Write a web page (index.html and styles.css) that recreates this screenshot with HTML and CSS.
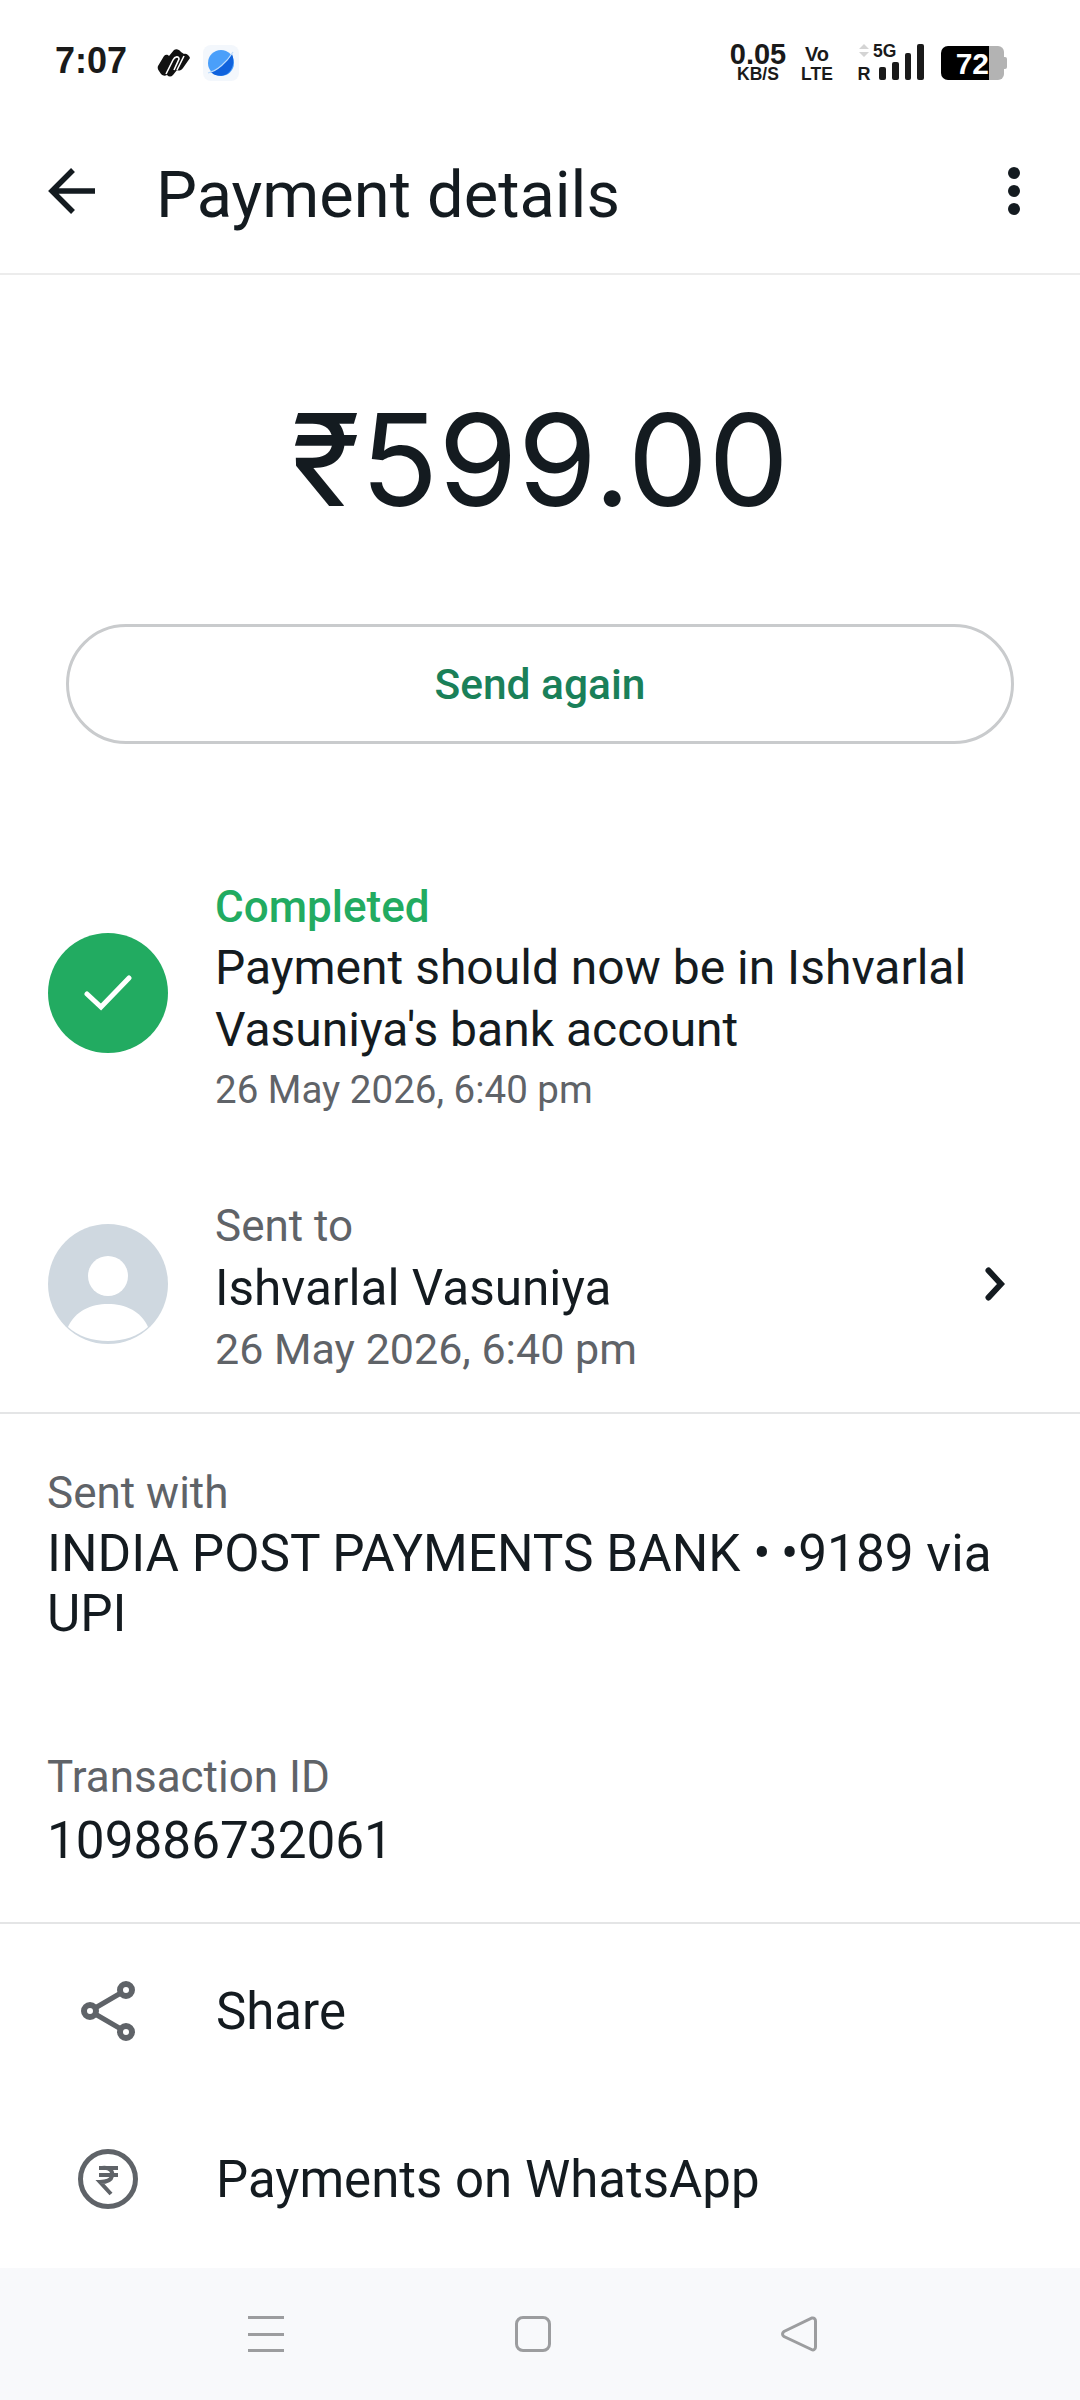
FILE: index.html
```html
<!DOCTYPE html>
<html lang="en">
<head>
  <meta charset="UTF-8">
  <meta name="viewport" content="width=device-width, initial-scale=1.0">
  <title>Payment details</title>
  <link rel="stylesheet" href="styles.css">
</head>
<body>
  <div class="phone">
    <div class="status-bar">
      <span class="clock">7:07</span>
      <svg class="app-logo" viewBox="0 0 34 28" width="34" height="28">
        <path d="M1 17 L7 7 C9 5 11 6 12 7 L17 1 C19 -0.500 22 0 24 3 L27 5 C29 4 32 6 33 9 L26 19 C24 22 21 22 20 21 L16 26 C14 28 12 28 10 26 C8 27 6 27 4 25 L2 22 C0.500 20 0.500 18 1 17Z" fill="#111"/>
        <path d="M9 25 L16 11 C18 7 22 7 22 10 L17 21 M20 21 L27 7" fill="none" stroke="#fff" stroke-width="1.600"/>
      </svg>
      <div class="planet-box">
        <svg viewBox="0 0 36 36" width="36" height="36">
          <circle cx="18" cy="18" r="13" fill="#4a9ffa"/>
          <path d="M7 27 C16 24 25 16 29 9 C32 16 30 25 24 29 C19 32 12 31 9 28Z" fill="#0f62dd"/>
          <path d="M5 28 C14 26 24 17 30 7" stroke="#bcdcfd" stroke-width="1.200" fill="none"/>
        </svg>
      </div>
      <div class="status-right">
        <div class="speed"><span class="speed-num">0.05</span><span class="speed-unit">KB/S</span></div>
        <div class="volte"><span class="vo">Vo</span><span>LTE</span></div>
        <div class="roaming">
          <svg viewBox="0 0 10 14" width="10" height="14"><path d="M5 0 L10 5 H0Z M0 8 H10 L5 13Z" fill="#d4d4d4"/></svg>
          <span>R</span>
        </div>
        <div class="signal">
          <span class="five-g">5G</span>
          <div class="bars">
            <i class="bar b1"></i><i class="bar b2"></i><i class="bar b3"></i><i class="bar b4"></i>
          </div>
        </div>
        <div class="battery">
          <div class="battery-fill">72</div>
          <div class="battery-empty"></div>
          <div class="battery-nub"></div>
        </div>
      </div>
    </div>

    <div class="app-bar">
      <svg class="back" viewBox="0 0 48 48" width="48" height="48">
        <path d="M47 24 H4 M25 3 L4 24 L25 45" stroke="#141b20" stroke-width="5.5" fill="none"/>
      </svg>
      <h1 class="title">Payment details</h1>
      <div class="more"><i></i><i></i><i></i></div>
    </div>

    <div class="amount">₹599.00</div>
    <div class="again-wrap"><button class="again">Send again</button></div>

    <div class="row status-row">
      <div class="icon-done">
        <svg viewBox="0 0 48 36" width="48" height="36"><path d="M3 19 L17 32 L45 3" stroke="#fff" stroke-width="5" stroke-linecap="round" fill="none"/></svg>
      </div>
      <div class="row-text">
        <div class="label green">Completed</div>
        <div class="body">Payment should now be in Ishvarlal Vasuniya's bank account</div>
        <div class="meta">26 May 2026, 6:40 pm</div>
      </div>
    </div>

    <div class="row sent-row">
      <div class="avatar">
        <svg viewBox="0 0 120 120" width="120" height="120">
          <circle cx="60" cy="52" r="20" fill="#fff"/>
          <path d="M20 103 C27 87 43 80 60 80 C77 80 93 87 100 103 C90 112 76 117 60 117 C44 117 30 112 20 103Z" fill="#fff"/>
        </svg>
      </div>
      <div class="row-text">
        <div class="label">Sent to</div>
        <div class="body name">Ishvarlal Vasuniya</div>
        <div class="meta meta-large">26 May 2026, 6:40 pm</div>
      </div>
      <svg class="chevron" viewBox="0 0 20 34" width="20" height="34">
        <path d="M3.500 3.500 L16 17 L3.500 30.500" stroke="#141b20" stroke-width="6" stroke-linecap="round" fill="none"/>
      </svg>
    </div>

    <div class="details">
      <div class="label">Sent with</div>
      <div class="body large bank">INDIA POST PAYMENTS BANK •&thinsp;•9189 via UPI</div>
      <div class="label txn">Transaction ID</div>
      <div class="body large">109886732061</div>
    </div>

    <div class="actions">
      <div class="action">
        <div class="action-icon">
          <svg viewBox="0 0 60 64" width="60" height="64">
            <path d="M12 32 L48 11 M12 32 L48 53" stroke="#5f6368" stroke-width="5" fill="none"/>
            <circle cx="12" cy="32" r="6" fill="#fff" stroke="#5f6368" stroke-width="6"/>
            <circle cx="48" cy="11" r="6" fill="#fff" stroke="#5f6368" stroke-width="6"/>
            <circle cx="48" cy="53" r="6" fill="#fff" stroke="#5f6368" stroke-width="6"/>
          </svg>
        </div>
        <span class="action-text">Share</span>
      </div>
      <div class="action">
        <div class="action-icon">
          <svg viewBox="0 0 60 60" width="60" height="60">
            <circle cx="30" cy="30" r="27.5" fill="none" stroke="#5f6368" stroke-width="5"/>
            <path d="M21 19 H40 M21 26 H40 M24 19 C33 18 35 23 34 27 C33 32 28 33 22 33 L33 45" fill="none" stroke="#5f6368" stroke-width="4"/>
          </svg>
        </div>
        <span class="action-text">Payments on WhatsApp</span>
      </div>
    </div>

    <div class="nav-bar">
      <div class="nav-menu"><i></i><i></i><i></i></div>
      <div class="nav-home"></div>
      <svg viewBox="0 0 36 36" width="36" height="36">
        <path d="M31 2 C33 1.500 34.500 3 34.500 5 V31 C34.500 33.500 32.500 34.500 30.500 33.500 L3 20.500 C1 19 1 17 3 15.500 Z" fill="none" stroke="#9c9d9f" stroke-width="3"/>
      </svg>
    </div>
  </div>
</body>
</html>
```

FILE: styles.css
```css
* {
  box-sizing: border-box;
}

body {
  margin: 0;
  background: #fff;
  font-family: Roboto, "Noto Sans", sans-serif;
  color: #141b20;
}

.phone {
  width: 1080px;
  height: 2400px;
  display: flex;
  flex-direction: column;
  overflow: hidden;
}

/* status bar */
.status-bar {
  height: 120px;
  padding: 37px 73px 0 55px;
  display: flex;
  align-items: flex-start;
  flex-shrink: 0;
}

.clock {
  font-family: "Liberation Sans", sans-serif;
  font-size: 36px;
  line-height: 48px;
  font-weight: 700;
  color: #1a1a1a;
  width: 100px;
}

.app-logo {
  margin: 12px 0 0 2px;
}

.planet-box {
  width: 36px;
  height: 36px;
  margin: 8px 0 0 12px;
  background: #f3f7fc;
  border-radius: 8px;
}

.status-right {
  margin-left: auto;
  margin-top: 5px;
  display: flex;
  font-family: "Liberation Sans", sans-serif;
  font-weight: 700;
  color: #1a1a1a;
}

.speed {
  width: 58px;
  display: flex;
  flex-direction: column;
  align-items: center;
  margin-right: 14px;
}

.speed-num {
  font-size: 29px;
  line-height: 24px;
}

.speed-unit {
  font-size: 17.5px;
  line-height: 16px;
}

.volte {
  width: 32px;
  display: flex;
  flex-direction: column;
  align-items: center;
  font-size: 17.5px;
  line-height: 16px;
  margin-right: 25px;
}

.vo {
  font-size: 20px;
  line-height: 24px;
}

.roaming {
  width: 12px;
  display: flex;
  flex-direction: column;
  align-items: center;
  font-size: 18px;
  line-height: 16px;
  margin-right: 9px;
  padding-top: 2px;
}

.roaming span {
  margin-top: 8px;
}

.signal {
  position: relative;
  width: 45px;
  height: 38px;
  margin-right: 17px;
  margin-top: 2px;
}

.five-g {
  position: absolute;
  left: -6px;
  top: -2px;
  font-size: 17.5px;
  line-height: 18px;
}

.bars {
  height: 36px;
  display: flex;
  align-items: flex-end;
  gap: 6px;
}

.bar {
  width: 7px;
  background: #1a1a1a;
  border-radius: 2px;
}

.b1 { height: 13px; }
.b2 { height: 18px; }
.b3 { height: 27px; }
.b4 { height: 36px; }

.battery {
  display: flex;
  align-items: center;
  height: 34px;
  margin-top: 4px;
}

.battery-fill {
  width: 48px;
  height: 34px;
  background: #000;
  color: #fff;
  border-radius: 7px 0 0 7px;
  font-size: 30px;
  line-height: 35px;
  text-align: right;
}

.battery-empty {
  width: 15px;
  height: 34px;
  background: #b3b3b3;
  border-radius: 0 6px 6px 0;
}

.battery-nub {
  width: 3px;
  height: 12px;
  background: #b3b3b3;
  border-radius: 0 2px 2px 0;
}

/* app bar */
.app-bar {
  height: 155px;
  padding: 0 44px 0 48px;
  display: flex;
  align-items: center;
  border-bottom: 2px solid #ececec;
  flex-shrink: 0;
}

.back {
  margin-top: -12px;
}

.title {
  margin: -3px 0 0 60px;
  font-size: 65px;
  font-weight: 400;
  line-height: 80px;
  flex: 1;
}

.more {
  width: 44px;
  display: flex;
  flex-direction: column;
  align-items: center;
  gap: 6px;
  margin-top: -11px;
}

.more i {
  width: 12px;
  height: 12px;
  border-radius: 50%;
  background: #141b20;
}

/* amount and button */
.amount {
  margin-top: 110px;
  font-family: Inter, Roboto, sans-serif;
  font-size: 128px;
  line-height: 150px;
  text-align: center;
  font-weight: 400;
}

.again-wrap {
  margin-top: 89px;
  padding: 0 66px;
}

.again {
  width: 100%;
  height: 120px;
  background: #fff;
  border: 3px solid #c9cbcd;
  border-radius: 60px;
  font-family: Roboto, sans-serif;
  font-size: 42.5px;
  font-weight: 500;
  color: #1a8059;
}

/* rows */
.row {
  display: flex;
  align-items: center;
  padding: 0 48px;
}

.status-row {
  margin-top: 133px;
}

.sent-row {
  margin-top: 77px;
  padding-right: 75px;
  padding-bottom: 34px;
  border-bottom: 2px solid #e4e5e6;
}

.icon-done {
  width: 120px;
  height: 120px;
  border-radius: 50%;
  background: #22ab61;
  display: flex;
  align-items: center;
  justify-content: center;
  flex-shrink: 0;
  margin-top: -10px;
}

.avatar {
  width: 120px;
  height: 120px;
  border-radius: 50%;
  background: #cfd8e0;
  flex-shrink: 0;
  margin-top: -6px;
}

.chevron {
  margin-top: -6px;
}

.row-text {
  margin-left: 47px;
  flex: 1;
}

.label {
  font-size: 44px;
  line-height: 60px;
  color: #5f6368;
}

.green {
  color: #22ab61;
  font-weight: 500;
}

.body {
  font-size: 48px;
  line-height: 62px;
  color: #141b20;
}

.name {
  font-size: 49.5px;
  line-height: 64px;
}

.large {
  font-size: 51.3px;
}

.meta {
  font-size: 38.5px;
  line-height: 58px;
  color: #5f6368;
}

.meta-large {
  font-size: 43px;
}

.details {
  padding: 49px 48px 0 47px;
}

.bank {
  height: 124px;
  line-height: 60px;
  margin-top: 1px;
}

.txn {
  margin-top: 99px;
  margin-bottom: 3px;
}

.actions {
  margin-top: 50px;
  padding-top: 3px;
  border-top: 2px solid #e4e5e6;
  flex: 1;
}

.action {
  height: 168px;
  display: flex;
  align-items: center;
}

.action-icon {
  width: 216px;
  display: flex;
  justify-content: center;
}

.action-text {
  font-size: 51px;
}

/* nav bar */
.nav-bar {
  height: 132px;
  background: #f8f9fb;
  padding: 48px 263px 0 248px;
  display: flex;
  align-items: flex-start;
  flex-shrink: 0;
  justify-content: space-between;
}

.nav-menu {
  width: 36px;
  height: 36px;
  display: flex;
  flex-direction: column;
  justify-content: space-between;
}

.nav-menu i {
  height: 3px;
  background: #9c9d9f;
}

.nav-home {
  width: 36px;
  height: 36px;
  border: 3px solid #9c9d9f;
  border-radius: 8px;
}
```
